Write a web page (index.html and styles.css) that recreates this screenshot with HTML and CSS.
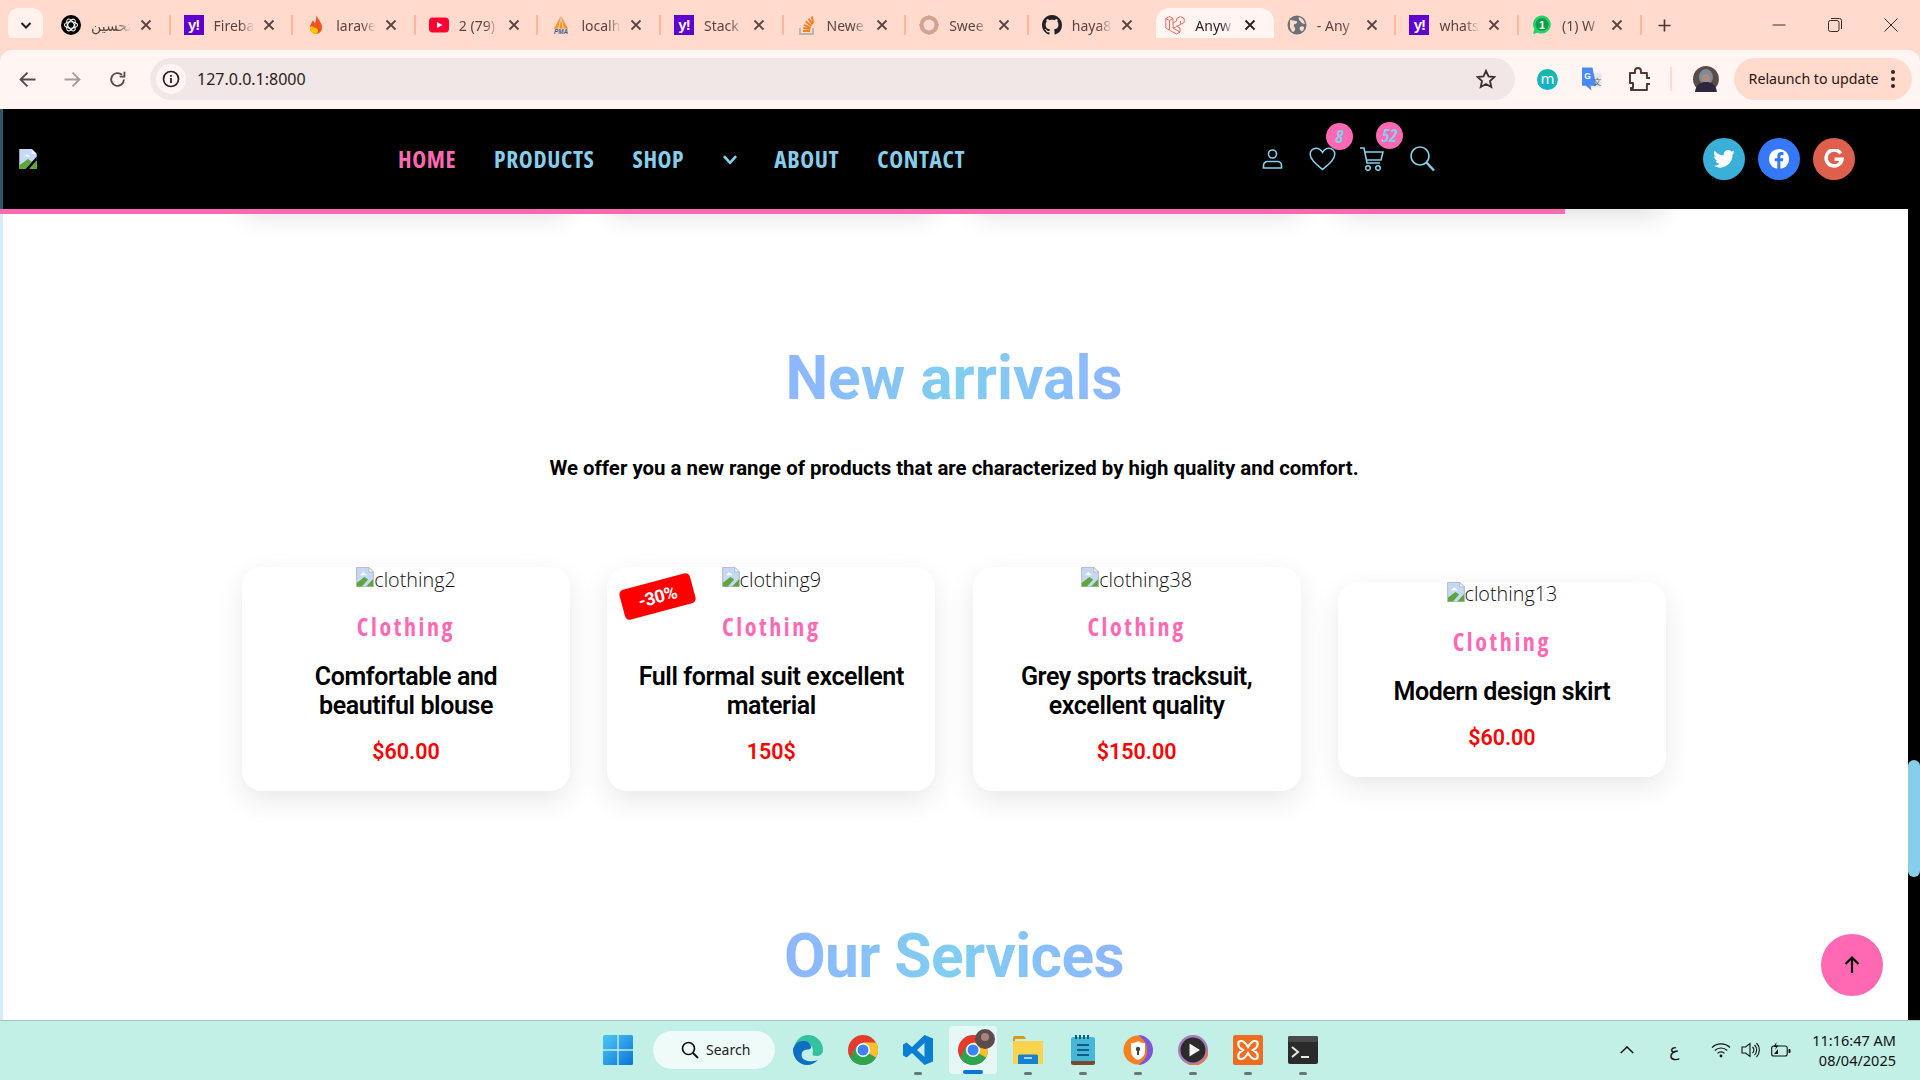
FILE: index.html
```html
<!DOCTYPE html>
<html lang="en">
<head>
<meta charset="utf-8">
<title>Anywhere</title>
<link rel="stylesheet" href="styles.css">
</head>
<body>
<div class="tabstrip">
  <div class="tab-menu"><svg width="14" height="14" viewBox="0 0 14 14"><path d="M2.5 5l4.5 4.5L11.5 5" fill="none" stroke="#2b1d1a" stroke-width="2"/></svg></div>

  <div class="tab"><svg class="fav" viewBox="0 0 20 20"><circle cx="10" cy="10" r="10" fill="#000"/><g fill="none" stroke="#fff" stroke-width="1.1"><ellipse cx="10" cy="10" rx="6.5" ry="3.2"/><ellipse cx="10" cy="10" rx="6.5" ry="3.2" transform="rotate(60 10 10)"/><ellipse cx="10" cy="10" rx="6.5" ry="3.2" transform="rotate(120 10 10)"/></g></svg><span class="tab-title">تحسين</span><svg class="x" viewBox="0 0 12 12"><path d="M1.5 1.5l9 9M10.5 1.5l-9 9"/></svg><i class="sep"></i></div>

  <div class="tab"><span class="fav yahoo">y!</span><span class="tab-title">Fireba</span><svg class="x" viewBox="0 0 12 12"><path d="M1.5 1.5l9 9M10.5 1.5l-9 9"/></svg><i class="sep"></i></div>

  <div class="tab"><svg class="fav" viewBox="0 0 20 20"><path d="M10 0c1 3 6 7 6 12.5A6.2 6.2 0 0 1 10 19a6.2 6.2 0 0 1-6-6.5c0-3 2-4.500 2.500-7 1 .5 2 1.500 2 3C10 7 10.500 3 10 0z" fill="#f4511e"/><path d="M6 11c1 2 5 1 6 4 .5 2-1 4-2.500 4A5.500 5.500 0 0 1 4 13c0-1 1-2 2-2z" fill="#ffc107"/></svg><span class="tab-title">larave</span><svg class="x" viewBox="0 0 12 12"><path d="M1.500 1.500l9 9M10.500 1.500l-9 9"/></svg><i class="sep"></i></div>

  <div class="tab"><svg class="fav" viewBox="0 0 20 20"><rect y="2.500" width="20" height="15" rx="4" fill="#ff0033"/><path d="M8 7l5.500 3L8 13z" fill="#fff"/></svg><span class="tab-title">2 (79)</span><svg class="x" viewBox="0 0 12 12"><path d="M1.500 1.500l9 9M10.500 1.500l-9 9"/></svg><i class="sep"></i></div>

  <div class="tab"><svg class="fav" viewBox="0 0 22 20"><path d="M11 0L3 14h5zM11 0l8 14h-5zM11 3l-2 11h4z" fill="#f39a2d"/><text x="11" y="19.500" font-size="7" font-weight="700" font-style="italic" text-anchor="middle" fill="#3c5a9a" font-family="Liberation Sans">PMA</text></svg><span class="tab-title">localh</span><svg class="x" viewBox="0 0 12 12"><path d="M1.500 1.500l9 9M10.500 1.500l-9 9"/></svg><i class="sep"></i></div>

  <div class="tab"><span class="fav yahoo">y!</span><span class="tab-title">Stack</span><svg class="x" viewBox="0 0 12 12"><path d="M1.500 1.500l9 9M10.500 1.500l-9 9"/></svg><i class="sep"></i></div>

  <div class="tab"><svg class="fav" viewBox="0 0 20 20"><path d="M3 13v6h13v-6" fill="none" stroke="#b9b4ae" stroke-width="1.800"/><g stroke="#f48024" stroke-width="2" fill="none"><path d="M6 16h7M6.300 13l7 1M7 9.800l6.500 3M8.800 6.500l5.500 4.500M11.500 3.500l4 6M15 1.500l1 7"/></g></svg><span class="tab-title">Newe</span><svg class="x" viewBox="0 0 12 12"><path d="M1.500 1.500l9 9M10.500 1.500l-9 9"/></svg><i class="sep"></i></div>

  <div class="tab"><svg class="fav" viewBox="0 0 20 20"><circle cx="10" cy="10" r="7.500" fill="none" stroke="#d9a679" stroke-width="4"/><circle cx="10" cy="10" r="7" fill="none" stroke="#c79ac9" stroke-width="2" stroke-dasharray="3 3"/><path d="M10 0v2M10 18v2M0 10h2M18 10h2" stroke="#c79ac9"/></svg><span class="tab-title">Swee</span><svg class="x" viewBox="0 0 12 12"><path d="M1.500 1.500l9 9M10.500 1.500l-9 9"/></svg><i class="sep"></i></div>

  <div class="tab"><svg class="fav" viewBox="0 0 16 16"><path fill="#1f2328" d="M8 0C3.580 0 0 3.580 0 8c0 3.540 2.290 6.530 5.470 7.590.4.070.55-.17.55-.38 0-.19-.01-.82-.01-1.490-2.010.37-2.530-.49-2.690-.94-.09-.23-.48-.94-.82-1.130-.28-.15-.68-.52-.01-.53.63-.01 1.080.58 1.230.82.72 1.210 1.870.87 2.330.66.070-.52.28-.87.51-1.070-1.780-.2-3.640-.89-3.640-3.950 0-.87.31-1.590.82-2.150-.08-.2-.36-1.020.08-2.120 0 0 .67-.21 2.200.82.64-.18 1.320-.27 2-.27.68 0 1.360.09 2 .27 1.530-1.040 2.200-.82 2.200-.82.44 1.100.16 1.920.08 2.120.51.56.82 1.270.82 2.150 0 3.070-1.870 3.750-3.650 3.950.29.25.54.73.54 1.480 0 1.070-.01 1.930-.01 2.200 0 .21.15.46.55.38A8.013 8.013 0 0 0 16 8c0-4.420-3.580-8-8-8z"/></svg><span class="tab-title">haya8</span><svg class="x" viewBox="0 0 12 12"><path d="M1.500 1.500l9 9M10.500 1.500l-9 9"/></svg></div>

  <div class="tab tab-active"><svg class="fav" viewBox="0 0 20 20"><path d="M.8 3.500L4.500 1.500 8 3.500v9.500l7 4 -3.500 2 -10.700-6zM8 8l3.700-2V3.500l3.700-2 3.800 2v4l-3.800 2V6M15.400 9.500L8 13.500M8 3.500L4.500 5.500.8 3.500M4.500 5.500v9.500M15 17v-4l-3.500-2" fill="none" stroke="#f4655a" stroke-width="1"/></svg><span class="tab-title">Anyw</span><svg class="x" viewBox="0 0 12 12"><path d="M1.500 1.500l9 9M10.500 1.500l-9 9"/></svg></div>

  <div class="tab"><svg class="fav" viewBox="0 0 20 20"><circle cx="10" cy="10" r="9.500" fill="#6b7176"/><path d="M3 5c3 0 4 1 6 1s1 3-1 3-1 3 0 4-1 4-2 4S2 12 3 10zM12 2c3 1 5 3 6 7-2 0-3-1-4-2s-3-3-2-5zM13 12c2-1 4-1 4 1s-2 4-3 3-2-3-1-4z" fill="#ffdacd"/></svg><span class="tab-title">- Any</span><svg class="x" viewBox="0 0 12 12"><path d="M1.500 1.500l9 9M10.500 1.500l-9 9"/></svg><i class="sep"></i></div>

  <div class="tab"><span class="fav yahoo">y!</span><span class="tab-title">whats</span><svg class="x" viewBox="0 0 12 12"><path d="M1.500 1.500l9 9M10.500 1.500l-9 9"/></svg><i class="sep"></i></div>

  <div class="tab"><svg class="fav" viewBox="0 0 20 20"><path d="M10 .5a9 9 0 0 0-7.700 13.600L1 19l5-1.300A9 9 0 1 0 10 .5z" fill="#25d366"/><circle cx="10" cy="9.500" r="6.500" fill="#0d9e4a"/><text x="10" y="13.500" font-size="11" font-weight="700" text-anchor="middle" fill="#fff" font-family="Liberation Sans">1</text></svg><span class="tab-title">(1) W</span><svg class="x" viewBox="0 0 12 12"><path d="M1.500 1.500l9 9M10.500 1.500l-9 9"/></svg><i class="sep"></i></div>

  <svg class="plus" viewBox="0 0 14 14"><path d="M7 .5v13M.5 7h13" stroke="#4a3a36" stroke-width="1.800"/></svg>

  <div class="win-controls">
    <svg viewBox="0 0 14 14"><path d="M.5 7h13" stroke="#3a2c28"/></svg>
    <svg viewBox="0 0 14 14"><rect x=".5" y="2.500" width="10.500" height="11" rx="2" fill="none" stroke="#3a2c28"/><path d="M3 .5h8.500a2 2 0 0 1 2 2V11" fill="none" stroke="#3a2c28"/></svg>
    <svg viewBox="0 0 14 14"><path d="M.5.500l13 13M13.500.500l-13 13" stroke="#3a2c28"/></svg>
  </div>
</div>

<div class="toolbar">
  <svg class="nav-btn" viewBox="0 0 16 16"><path d="M15.500 8H1.500M8 1.500L1.500 8 8 14.500" fill="none" stroke="#5b4a45" stroke-width="1.800"/></svg>
  <svg class="nav-btn nav-off" viewBox="0 0 16 16"><path d="M.5 8h14M8 1.500L14.500 8 8 14.500" fill="none" stroke="#a89c98" stroke-width="1.800"/></svg>
  <svg class="nav-btn" viewBox="0 0 16 16"><path d="M14 8a6 6 0 1 1-1.800-4.300M14.500 .8v4.500H10" fill="none" stroke="#5b4a45" stroke-width="1.800"/></svg>
  <div class="address">
    <span class="site-info"><svg width="18" height="18" viewBox="0 0 18 18"><circle cx="9" cy="9" r="7.500" fill="none" stroke="#2b1d1a" stroke-width="1.700"/><path d="M9 8v5M9 5v1.800" stroke="#2b1d1a" stroke-width="1.800"/></svg></span>
    <span class="url">127.0.0.1:8000</span>
    <svg class="star" viewBox="0 0 20 20"><path d="M10 1.800l2.500 5.600 6 .6-4.500 4 1.300 6L10 15.000 4.700 18l1.300-6-4.500-4 6-.6z" fill="none" stroke="#3f302c" stroke-width="1.800"/></svg>
  </div>
  <div class="tool-right">
    <span class="ext-m">m</span>
    <svg class="ext-tr" viewBox="0 0 22 24"><path d="M9 6h12v15H9z" fill="#e8e8e8"/><path d="M0 0h11l4 19H9l1 5-6-5H0z" fill="#4a8af4"/><text x="6" y="12" font-size="9" font-weight="700" text-anchor="middle" fill="#fff" font-family="Liberation Sans">G</text><text x="16" y="18" font-size="8" text-anchor="middle" fill="#666" font-family="Noto Sans CJK SC">文</text></svg>
    <svg class="ext-pz" viewBox="0 0 22 24"><path d="M2 6h5V4a3 3 0 0 1 6 0v2h6v5h2a3 3 0 0 1 0 6h-2v6H3v-2a0 0 0 0 1 0 0h2v-5H2z" fill="none" stroke="#4b3a36" stroke-width="2" stroke-linejoin="round"/></svg>
    <i class="tool-sep"></i>
    <svg class="avatar" viewBox="0 0 26 26"><circle cx="13" cy="13" r="13" fill="#5d4b4a"/><ellipse cx="13" cy="11" rx="7" ry="8" fill="#7b8d98"/><circle cx="13" cy="12" r="4" fill="#b08a7c"/><path d="M2 26c1-8 6-10 11-10s10 2 11 10z" fill="#2e2740"/></svg>
    <div class="relaunch"><span class="relaunch-text">Relaunch to update</span><svg width="6" height="20" viewBox="0 0 6 20"><circle cx="3" cy="3" r="2" fill="#3a2020"/><circle cx="3" cy="10" r="2" fill="#3a2020"/><circle cx="3" cy="17" r="2" fill="#3a2020"/></svg></div>
  </div>
</div>

<div class="page">
  <div class="content">
    <header class="site-header">
      <svg class="logo" viewBox="0 0 14 16"><path d="M0 0h10l4 4v12H0z" fill="#c4d8f7"/><path d="M10 0l4 4h-4z" fill="#f4f4f4"/><path d="M4 6l2-2 3 2z" fill="#fff"/><path d="M0 16v-3l7-5 3 2-5 6z" fill="#5ea63b"/><path d="M8 16l6-7v7z" fill="#5ea63b"/><path d="M5 16l9-10v3l-6 7z" fill="#000"/></svg>
      <nav class="main-nav">
        <a class="nav-link is-current">HOME</a>
        <a class="nav-link">PRODUCTS</a>
        <a class="nav-link">SHOP</a>
        <svg class="nav-chevron" viewBox="0 0 14 10"><path d="M1.500 2l5.500 6 5.500-6" fill="none" stroke="#87ceeb" stroke-width="2.400"/></svg>
        <a class="nav-link">ABOUT</a>
        <a class="nav-link">CONTACT</a>
      </nav>
      <div class="head-icons">
        <svg class="hi hi-user" viewBox="0 0 21 20"><circle cx="10.500" cy="5" r="4" fill="none" stroke="#87ceeb" stroke-width="1.600"/><path d="M1.500 19v-2.500a4 4 0 0 1 4-4h10a4 4 0 0 1 4 4V19z" fill="none" stroke="#87ceeb" stroke-width="1.600"/></svg>
        <span class="hi-wrap hi-heart"><svg viewBox="0 0 27 24"><path d="M13.500 22.500C7 17 1.200 12.500 1.200 7.300A5.800 5.800 0 0 1 7 1.300c2.800 0 5 1.500 6.500 4.200C15 2.800 17.200 1.300 20 1.300a5.800 5.800 0 0 1 5.800 6c0 5.200-5.800 9.700-12.300 15.200z" fill="none" stroke="#87ceeb" stroke-width="1.500"/></svg><b class="count count-wish">8</b></span>
        <span class="hi-wrap hi-cart"><svg viewBox="0 0 24 24"><path d="M0 1h4l3 15h13M5 5h18l-2 8H6.500" fill="none" stroke="#87ceeb" stroke-width="1.600"/><circle cx="8" cy="21" r="2.300" fill="none" stroke="#87ceeb" stroke-width="1.500"/><circle cx="18" cy="21" r="2.300" fill="none" stroke="#87ceeb" stroke-width="1.500"/></svg><b class="count count-cart">52</b></span>
        <svg class="hi hi-search" viewBox="0 0 25 25"><circle cx="10" cy="10" r="9" fill="none" stroke="#87ceeb" stroke-width="1.700"/><path d="M16.500 16.500L24 24.500" stroke="#87ceeb" stroke-width="2.400"/></svg>
      </div>
      <div class="socials">
        <span class="social tw"><svg width="22" height="18" viewBox="0 0 24 20"><path fill="#fff" d="M24 2.400a10 10 0 0 1-2.800.8A5 5 0 0 0 23.300.500a10 10 0 0 1-3.100 1.200 4.900 4.900 0 0 0-8.400 4.500A14 14 0 0 1 1.700.900a4.900 4.900 0 0 0 1.500 6.600 4.900 4.900 0 0 1-2.200-.6 4.900 4.900 0 0 0 3.900 4.900 4.900 4.900 0 0 1-2.200.1 4.900 4.900 0 0 0 4.600 3.400A9.900 9.900 0 0 1 0 17.300 14 14 0 0 0 21.500 4.900 10 10 0 0 0 24 2.400z"/></svg></span>
        <span class="social fb"><svg width="22" height="22" viewBox="0 0 24 24"><circle cx="12" cy="12" r="11" fill="#fff"/><path fill="#3578fa" d="M13.500 23v-8.500h2.800l.5-3.300h-3.300V9.200c0-1 .4-1.700 1.800-1.700h1.600V4.600c-.7-.1-1.500-.2-2.400-.2-2.600 0-4.300 1.500-4.300 4.400v2.400H7.300v3.300h2.900V23z"/></svg></span>
        <span class="social gg"><svg width="20" height="20" viewBox="0 0 20 20"><path d="M16.800 4.500A8 8 0 1 0 18 10.200h-7.500" fill="none" stroke="#fff" stroke-width="3.600"/></svg></span>
      </div>
    </header>
    <div class="progress"><div class="progress-fill"></div></div>

    <main class="main">
      <div class="ghost-row"><i></i><i></i><i></i><i></i></div>

      <h2 class="section-title title-first">New arrivals</h2>
      <p class="section-sub">We offer you a new range of products that are characterized by high quality and comfort.</p>

      <div class="product-grid">
        <article class="card">
          <div class="alt-line"><svg class="broken" viewBox="0 0 14 16"><path d="M.3.300h9.700l3.700 3.700v11.700H.3z" fill="#c4d8f7" stroke="#a9a9a9" stroke-width=".6"/><path d="M10 .3l3.700 3.700H10z" fill="#f4f4f4" stroke="#a9a9a9" stroke-width=".5"/><path d="M3 6.500l2.500-2.500 3 2.500z" fill="#fff"/><path d="M.5 15.500v-3l6-4.500 3 2-5 5.500z" fill="#5ea63b"/><path d="M8 15.500l5.500-6v6z" fill="#5ea63b"/></svg>clothing2</div>
          <div class="cat">Clothing</div>
          <h3 class="name">Comfortable and beautiful blouse</h3>
          <div class="price">$60.00</div>
        </article>
        <article class="card">
          <span class="discount">-30%</span>
          <div class="alt-line"><svg class="broken" viewBox="0 0 14 16"><path d="M.3.300h9.700l3.700 3.700v11.700H.3z" fill="#c4d8f7" stroke="#a9a9a9" stroke-width=".6"/><path d="M10 .3l3.700 3.700H10z" fill="#f4f4f4" stroke="#a9a9a9" stroke-width=".5"/><path d="M3 6.500l2.500-2.500 3 2.500z" fill="#fff"/><path d="M.5 15.500v-3l6-4.500 3 2-5 5.500z" fill="#5ea63b"/><path d="M8 15.500l5.500-6v6z" fill="#5ea63b"/></svg>clothing9</div>
          <div class="cat">Clothing</div>
          <h3 class="name">Full formal suit excellent material</h3>
          <div class="price">150$</div>
        </article>
        <article class="card">
          <div class="alt-line"><svg class="broken" viewBox="0 0 14 16"><path d="M.3.300h9.700l3.700 3.700v11.700H.3z" fill="#c4d8f7" stroke="#a9a9a9" stroke-width=".6"/><path d="M10 .3l3.700 3.700H10z" fill="#f4f4f4" stroke="#a9a9a9" stroke-width=".5"/><path d="M3 6.500l2.500-2.500 3 2.500z" fill="#fff"/><path d="M.5 15.500v-3l6-4.500 3 2-5 5.500z" fill="#5ea63b"/><path d="M8 15.500l5.500-6v6z" fill="#5ea63b"/></svg>clothing38</div>
          <div class="cat">Clothing</div>
          <h3 class="name">Grey sports tracksuit, excellent quality</h3>
          <div class="price">$150.00</div>
        </article>
        <article class="card">
          <div class="alt-line"><svg class="broken" viewBox="0 0 14 16"><path d="M.3.300h9.700l3.700 3.700v11.700H.3z" fill="#c4d8f7" stroke="#a9a9a9" stroke-width=".6"/><path d="M10 .3l3.700 3.700H10z" fill="#f4f4f4" stroke="#a9a9a9" stroke-width=".5"/><path d="M3 6.500l2.500-2.500 3 2.500z" fill="#fff"/><path d="M.5 15.500v-3l6-4.500 3 2-5 5.500z" fill="#5ea63b"/><path d="M8 15.500l5.500-6v6z" fill="#5ea63b"/></svg>clothing13</div>
          <div class="cat">Clothing</div>
          <h3 class="name">Modern design skirt</h3>
          <div class="price">$60.00</div>
        </article>
      </div>

      <h2 class="section-title title-services">Our Services</h2>
    </main>
    <button class="to-top" type="button"><svg width="20" height="20" viewBox="0 0 20 20"><path d="M10 18V2.500M3.500 9L10 2.500 16.500 9" fill="none" stroke="#000" stroke-width="2.200"/></svg></button>
  </div>
  <div class="scrollbar"><div class="thumb"></div></div>
</div>

<footer class="taskbar">
  <div class="tb-item"><svg class="tb-ic" viewBox="0 0 30 30"><defs><linearGradient id="w" x1="0" y1="0" x2="1" y2="1"><stop offset="0" stop-color="#4fc8f5"/><stop offset="1" stop-color="#0a74d8"/></linearGradient></defs><path fill="url(#w)" d="M0 1.500A1.500 1.500 0 0 1 1.500 0h12.800v14.300H0zM15.700 0h12.800A1.500 1.500 0 0 1 30 1.500v12.800H15.700zM0 15.700h14.300V30H1.500A1.500 1.500 0 0 1 0 28.500zM15.700 15.700H30v12.800a1.500 1.500 0 0 1-1.500 1.500H15.700z"/></svg></div>
  <div class="tb-search"><svg width="18" height="18" viewBox="0 0 18 18"><circle cx="7.500" cy="7.500" r="6" fill="none" stroke="#111" stroke-width="1.700"/><path d="M12 12l5 5" stroke="#111" stroke-width="1.900"/></svg><span>Search</span></div>
  <div class="tb-item tb-first"><svg class="tb-ic" viewBox="0 0 30 30"><path d="M15 0a15 15 0 0 1 15 15c0 4-3 6-7 6-5 0-3-3-3-5 0-5-4-9-9-9-4 0-8 2-10 5C3 5 8 0 15 0z" fill="#35c1a0"/><path d="M1 12c2-4 5-6 10-6 4 0 7 3 7 6s-3 2-6 3c-3 1-4 4-3 7 1 3 6 5 12 4 2 0 3-1 4-1-3 3-7 5-11 5C6 30 0 23 0 15c0-1 0-2 1-3z" fill="#0c6fc4"/></svg></div>
  <div class="tb-item"><svg class="tb-ic" viewBox="0 0 30 30"><circle cx="15" cy="15" r="15" fill="#e33b2e"/><path d="M15 15L2 22.500A15 15 0 0 0 15 30a15 15 0 0 0 13-7.500z" fill="#2ea44f"/><path d="M15 15L28 22.500A15 15 0 0 0 28 7.500H15z" fill="#fbc02d"/><path d="M15 15L2 22.500 8.500 11z" fill="#2ea44f"/><circle cx="15" cy="15" r="7" fill="#fff"/><circle cx="15" cy="15" r="5.500" fill="#3b82f6"/></svg></div>
  <div class="tb-item"><svg class="tb-ic" viewBox="0 0 30 30"><path d="M21.500 0L30 3.500v23L21.500 30 9 18 3.500 22.500 0 20.500v-11L3.500 7.500 9 12zM21.500 8L14 15l7.500 7z" fill="#0a7fd1" fill-rule="evenodd"/></svg><i class="tb-dot"></i></div>
  <div class="tb-item tb-active"><svg class="tb-ic" viewBox="0 0 30 30"><circle cx="15" cy="15" r="15" fill="#e33b2e"/><path d="M15 15L2 22.500A15 15 0 0 0 15 30a15 15 0 0 0 13-7.500z" fill="#2ea44f"/><path d="M15 15L28 22.500A15 15 0 0 0 28 7.500H15z" fill="#fbc02d"/><path d="M15 15L2 22.500 8.500 11z" fill="#2ea44f"/><circle cx="15" cy="15" r="7" fill="#fff"/><circle cx="15" cy="15" r="5.500" fill="#3b82f6"/></svg><svg class="tb-badge" viewBox="0 0 20 20"><circle cx="10" cy="10" r="10" fill="#5c4c4c"/><circle cx="10" cy="8" r="4" fill="#a8837a"/></svg><i class="tb-bar"></i></div>
  <div class="tb-item"><svg class="tb-ic" viewBox="0 0 30 30"><path d="M0 3a2 2 0 0 1 2-2h9l2 3h-11v4H0z" fill="#d69b12"/><path d="M0 6h30v23H0z" fill="#fcd34d"/><path d="M5 21a1.500 1.500 0 0 1 1.500-1.500h17A1.500 1.500 0 0 1 25 21v8H5z" fill="#1480d0"/><path d="M11 23h8" stroke="#d9efff" stroke-width="1.500"/></svg><i class="tb-dot"></i></div>
  <div class="tb-item"><svg class="tb-ic" viewBox="0 0 30 30"><rect x="3" y="2" width="24" height="26" rx="2" fill="#45b7d9"/><path d="M3 26h24v2a2 2 0 0 1-2 2H5a2 2 0 0 1-2-2z" fill="#7b4a2a"/><path d="M9 10h12M9 15h12M9 20h12" stroke="#0f5d80" stroke-width="1.800"/><path d="M8 0v4M12 0v4M16 0v4M20 0v4" stroke="#135a78" stroke-width="2"/></svg><i class="tb-dot"></i></div>
  <div class="tb-item"><svg class="tb-ic" viewBox="0 0 30 30"><circle cx="15" cy="15" r="14.500" fill="#f5821f"/><path d="M15 0a15 15 0 0 1 15 15c0 8-7 15-15 15 6-4 9-8 9-15S20 4 15 0z" fill="#7d56d9"/><path d="M15 6c3 2 5 2 7 2v8c0 5-4 8-7 9-3-1-7-4-7-9V8c2 0 4 0 7-2z" fill="#fff"/><circle cx="15" cy="14" r="2.200" fill="#444"/><path d="M14 15h2v5h-2z" fill="#444"/></svg><i class="tb-dot"></i></div>
  <div class="tb-item"><svg class="tb-ic" viewBox="0 0 30 30"><circle cx="15" cy="15" r="15" fill="#a87ac0"/><circle cx="15" cy="15" r="15" fill="none" stroke="#e87b3a" stroke-width="2" stroke-dasharray="28 70"/><circle cx="15" cy="15" r="12.500" fill="#2b2b2b"/><path d="M11.500 8.500L22 15l-10.500 6.500z" fill="#f4f4f4"/></svg><i class="tb-dot"></i></div>
  <div class="tb-item"><svg class="tb-ic" viewBox="0 0 30 30"><rect width="30" height="30" rx="2" fill="#ee6d1f"/><path d="M8 6c4 0 5 3 7 6 2-3 3-6 7-6s3 5 1 7l-3 2 3 2c2 2 3 7-1 7s-5-3-7-6c-2 3-3 6-7 6s-3-5-1-7l3-2-3-2C5 11 4 6 8 6z" fill="none" stroke="#fff" stroke-width="2.200"/></svg><i class="tb-dot"></i></div>
  <div class="tb-item"><svg class="tb-ic" viewBox="0 0 30 30"><rect y="1" width="30" height="28" rx="2" fill="#2b2b2b"/><rect y="1" width="30" height="6" rx="2" fill="#4a4a4a"/><path d="M4 12l6 5-6 5" fill="none" stroke="#e8e8e8" stroke-width="2"/><path d="M13 22h8" stroke="#e8e8e8" stroke-width="2"/></svg><i class="tb-dot"></i></div>

  <div class="tray">
    <svg class="tr-chev" viewBox="0 0 14 8"><path d="M.8 7L7 1l6.200 6" fill="none" stroke="#111" stroke-width="1.500"/></svg>
    <span class="tr-lang">ع</span>
    <svg class="tr-wifi" viewBox="0 0 20 16"><path d="M1 5.500a13 13 0 0 1 18 0M3.800 8.500a9 9 0 0 1 12.400 0M6.500 11.300a5 5 0 0 1 7 0" fill="none" stroke="#111" stroke-width="1.100"/><circle cx="10" cy="14" r="1.400" fill="#111"/></svg>
    <svg class="tr-vol" viewBox="0 0 20 16"><path d="M1 5h3.500L9 1.500v13L4.500 11H1z" fill="none" stroke="#111" stroke-width="1.100"/><path d="M11.500 5a4 4 0 0 1 0 6M13.500 3a7 7 0 0 1 0 10M15.500 1a10 10 0 0 1 0 14" fill="none" stroke="#111" stroke-width="1.100"/></svg>
    <svg class="tr-bat" viewBox="0 0 20 16"><rect x=".7" y="4" width="15.500" height="10" rx="2" fill="none" stroke="#111" stroke-width="1.100"/><path d="M17.500 7h1a1 1 0 0 1 1 1v2a1 1 0 0 1-1 1h-1z" fill="#111"/><path d="M3 12l4-5v5z" fill="#111"/><path d="M5.500 0L2.500 5h2.500l-1 3 3.500-4.500H5z" fill="#111"/></svg>
    <div class="clock"><span>11:16:47 AM</span><span>08/04/2025</span></div>
  </div>
</footer>
</body>
</html>
```

FILE: styles.css
```css
* { box-sizing: border-box; }
html, body { margin: 0; height: 100%; }
body {
  width: 1920px;
  height: 1080px;
  overflow: hidden;
  display: flex;
  flex-direction: column;
  font-family: "Open Sans", "Noto Sans", sans-serif;
  background: #fff;
}

/* Browser tab strip */
.tabstrip {
  height: 50px;
  flex: none;
  display: flex;
  align-items: center;
  padding-left: 8px;
  background: #ffdacd;
}
.tab-menu {
  width: 35px;
  height: 34px;
  margin-right: 5px;
  border-radius: 10px;
  background: #fff1ec;
  display: flex;
  align-items: center;
  justify-content: center;
}
.tab {
  width: 122.6px;
  height: 34px;
  flex: none;
  display: flex;
  align-items: center;
  padding-left: 13px;
  font-size: 15px;
  color: #5a4640;
}
.fav {
  width: 20px;
  height: 20px;
  flex: none;
}
.yahoo {
  background: #5f01d1;
  color: #fff;
  font-family: "Liberation Sans", sans-serif;
  font-weight: 700;
  font-size: 15px;
  line-height: 20px;
  text-align: center;
  letter-spacing: -1px;
}
.tab-title {
  width: 40px;
  margin-left: 10px;
  overflow: hidden;
  white-space: nowrap;
  font-family: "Noto Sans", "DejaVu Sans", sans-serif;
  font-size: 14px;
  -webkit-mask-image: linear-gradient(90deg, #000 65%, transparent 100%);
  mask-image: linear-gradient(90deg, #000 65%, transparent 100%);
}
.x {
  width: 12px;
  height: 12px;
  margin-left: 9px;
  flex: none;
  fill: none;
  stroke: #5a4640;
  stroke-width: 1.800;
}
.sep {
  width: 2px;
  height: 20px;
  margin-left: auto;
  background: #ffb7a1;
}
.tab-active {
  position: relative;
  width: 117.5px;
  height: 42px;
  align-self: flex-end;
  margin-left: 5px;
  padding-left: 9px;
  padding-bottom: 8px;
  background: #fff6f4;
  border-radius: 14px 14px 0 0;
  color: #2b1d1a;
}
.tab-active .x { stroke: #2b1d1a; }
.tab-active::before,
.tab-active::after {
  content: "";
  position: absolute;
  bottom: 0;
  width: 14px;
  height: 14px;
}
.tab-active::before {
  left: -14px;
  background: radial-gradient(circle at 0 0, #ffdacd 14px, #fff6f4 14.500px);
}
.tab-active::after {
  right: -14px;
  background: radial-gradient(circle at 100% 0, #ffdacd 14px, #fff6f4 14.500px);
}
.plus {
  width: 13px;
  height: 13px;
  margin-left: 16px;
  flex: none;
}
.win-controls {
  margin-left: auto;
  display: flex;
  padding-right: 1px;
}
.win-controls svg {
  width: 56px;
  height: 14px;
}

/* Browser toolbar */
.toolbar {
  height: 59px;
  flex: none;
  display: flex;
  align-items: center;
  padding-left: 5px;
  padding-bottom: 1px;
  background: #fff6f4;
  border-radius: 12px 12px 0 0;
  position: relative;
  box-shadow: 0 -12px 0 0 #ffdacd;
}
.nav-btn {
  width: 45px;
  height: 17px;
  flex: none;
}
.address {
  flex: 1;
  height: 42px;
  margin-left: 10px;
  display: flex;
  align-items: center;
  padding-left: 6px;
  padding-right: 19px;
  border-radius: 21px;
  background: #f1e7e6;
}
.site-info {
  width: 30px;
  height: 30px;
  border-radius: 50%;
  background: #fff6f4;
  display: flex;
  align-items: center;
  justify-content: center;
}
.url {
  margin-left: 11px;
  font-family: "Noto Sans", sans-serif;
  font-size: 16px;
  color: #2b1d1a;
}
.star {
  width: 20px;
  height: 20px;
  margin-left: auto;
}
.tool-right {
  width: 405px;
  flex: none;
  display: flex;
  align-items: center;
  padding-left: 22px;
  padding-right: 8px;
}
.ext-m {
  width: 21px;
  height: 21px;
  border-radius: 50%;
  background: linear-gradient(#18b7a7, #12b3cf);
  color: #fff;
  font-size: 15px;
  line-height: 19px;
  text-align: center;
  font-family: "Noto Sans", sans-serif;
}
.ext-tr {
  width: 21px;
  height: 24px;
  margin-left: 24px;
}
.ext-pz {
  width: 22px;
  height: 24px;
  margin-left: 25px;
}
.tool-sep {
  width: 2px;
  height: 24px;
  margin-left: 20px;
  background: #ffdacd;
}
.avatar {
  width: 26px;
  height: 26px;
  margin-left: 21px;
}
.relaunch {
  width: 179px;
  height: 42px;
  margin-left: 15px;
  display: flex;
  align-items: center;
  justify-content: space-between;
  padding: 0 16px 0 15px;
  border-radius: 21px;
  background: #ffdacd;
  font-family: "Noto Sans", sans-serif;
  font-size: 14.200px;
  color: #2b1414;
  white-space: nowrap;
}
.relaunch-text { padding-bottom: 2px; }

/* Page viewport */
.page {
  flex: 1;
  min-height: 0;
  display: flex;
}
.content {
  position: relative;
  flex: 1;
  min-width: 0;
  overflow: hidden;
  background: #fff;
}
.content::before {
  content: "";
  position: absolute;
  z-index: 1;
  left: 0;
  top: 0;
  bottom: 0;
  width: 3px;
  background: #d3eefa;
}
.scrollbar {
  width: 12px;
  flex: none;
  background: #000;
  padding-top: 651px;
}
.thumb {
  height: 117px;
  border-radius: 6px;
  background: #87ceeb;
}
.site-header {
  position: relative;
  z-index: 2;
  height: 100px;
  display: flex;
  align-items: center;
  background: #000;
  box-shadow: inset 3px 0 0 #2f5568;
}
.logo {
  width: 18px;
  height: 20px;
  margin-left: 19px;
  flex: none;
}
.main-nav {
  display: flex;
  align-items: center;
  margin-left: 361px;
}
.nav-link {
  font-size: 23.500px;
  font-stretch: 75%;
  font-weight: 700;
  letter-spacing: .6px;
  color: #87ceeb;
  margin-right: 38px;
  white-space: nowrap;
}
.nav-link.is-current { color: #ff69b4; }
.nav-chevron {
  width: 16px;
  height: 11px;
  margin-right: 36px;
}
.head-icons {
  position: absolute;
  left: 1262px;
  top: 37px;
  display: flex;
  align-items: center;
}
.hi-user { width: 21px; height: 20px; }
.hi-wrap { position: relative; display: block; }
.hi-wrap svg { display: block; }
.hi-heart { width: 27px; height: 24px; margin-left: 26px; }
.hi-cart { width: 24px; height: 24px; margin-left: 24px; }
.hi-search { width: 25px; height: 25px; margin-left: 26px; }
.count {
  position: absolute;
  width: 27px;
  height: 27px;
  border-radius: 50%;
  background: #ff69b4;
  color: #87ceeb;
  font-size: 18px;
  font-stretch: 75%;
  font-style: italic;
  font-weight: 700;
  line-height: 27px;
  text-align: center;
}
.count-wish { left: 17px; top: -24px; }
.count-cart { left: 16px; top: -25px; }
.socials {
  position: absolute;
  left: 1703px;
  top: 29px;
  display: flex;
  gap: 13px;
}
.social {
  width: 42px;
  height: 42px;
  border-radius: 50%;
  display: flex;
  align-items: center;
  justify-content: center;
}
.tw { background: #3ab0d8; }
.fb { background: #3578fa; }
.gg { background: #dd5f4c; }
.progress {
  position: relative;
  z-index: 2;
  height: 5px;
}
.progress-fill {
  width: 1565px;
  height: 5px;
  background: #ff69b4;
}

/* Main */
.main {
  display: flex;
  flex-direction: column;
  align-items: center;
}
.ghost-row {
  width: 1424px;
  height: 22px;
  margin-top: -30px;
  display: grid;
  grid-template-columns: repeat(4, 328px);
  gap: 37.300px;
}
.ghost-row i {
  display: block;
  border-radius: 20px;
  background: #fff;
  box-shadow: 0 10px 24px rgba(0, 0, 0, .13);
}
.section-title {
  margin: 0;
  font-family: "Roboto", sans-serif;
  font-size: 60.500px;
  line-height: 72px;
  font-weight: 700;
  text-align: center;
  background: linear-gradient(90deg, #8eb6ff, #80cef0 50%, #8eb6ff);
  -webkit-background-clip: text;
  background-clip: text;
  color: transparent;
}
.title-first { margin-top: 137px; }
.title-services { margin-top: 130px; letter-spacing: -.6px; }
.section-sub {
  margin: 38px 0 0;
  font-family: "Roboto", sans-serif;
  font-size: 20.400px;
  line-height: 30px;
  font-weight: 700;
  color: #000;
  text-align: center;
}
.product-grid {
  width: 1424px;
  margin-top: 84px;
  display: grid;
  grid-template-columns: repeat(4, 328px);
  gap: 37.300px;
  align-items: center;
}
.card {
  position: relative;
  padding: 0 30px 22px;
  border-radius: 20px;
  background: #fff;
  box-shadow: 0 10px 28px rgba(0, 0, 0, .09);
  text-align: center;
}
.alt-line {
  height: 26px;
  padding-bottom: 2px;
  display: flex;
  align-items: center;
  justify-content: center;
  font-size: 19.800px;
  font-stretch: 93%;
  font-weight: 300;
  color: #111;
}
.broken {
  width: 18px;
  height: 20px;
  margin-bottom: 4px;
}
.cat {
  margin-top: 16px;
  font-size: 24px;
  font-stretch: 75%;
  line-height: 36px;
  font-weight: 700;
  letter-spacing: 2.600px;
  color: #ff69b4;
}
.name {
  margin: 17px 0 0;
  font-family: "Roboto", sans-serif;
  font-size: 25px;
  line-height: 29px;
  font-weight: 600;
  letter-spacing: -.4px;
  color: #000;
}
.price {
  margin-top: 15px;
  font-family: "Roboto", sans-serif;
  font-size: 21.500px;
  line-height: 34px;
  font-weight: 600;
  color: #f00;
}
.discount {
  position: absolute;
  left: 14px;
  top: 14px;
  width: 73px;
  height: 31px;
  border-radius: 5px;
  background: #f00;
  color: #fff;
  font-family: "Roboto", sans-serif;
  font-size: 18px;
  font-weight: 700;
  letter-spacing: -.5px;
  line-height: 31px;
  transform: rotate(-15deg);
}
.to-top {
  position: absolute;
  z-index: 4;
  right: 25px;
  bottom: 24px;
  width: 62px;
  height: 62px;
  padding: 0;
  border: 0;
  border-radius: 50%;
  background: #ff69b4;
  display: flex;
  align-items: center;
  justify-content: center;
}

/* Taskbar */
.taskbar {
  height: 60px;
  flex: none;
  display: flex;
  align-items: center;
  padding-left: 590px;
  padding-bottom: 2px;
  border-top: 1px solid #a6c4bc;
  background: #c2efe6;
}
.tb-item {
  position: relative;
  width: 55px;
  height: 48px;
  flex: none;
  display: flex;
  align-items: center;
  justify-content: center;
}
.tb-first { margin-left: 5px; }
.tb-ic {
  width: 30px;
  height: 30px;
}
.tb-dot {
  position: absolute;
  left: 50%;
  bottom: -1px;
  width: 8px;
  height: 3px;
  margin-left: -4px;
  border-radius: 2px;
  background: #66767a;
}
.tb-active::before {
  content: "";
  position: absolute;
  left: 3.500px;
  top: 0;
  width: 48px;
  height: 48px;
  border-radius: 4px;
  background: #e6f8f5;
}
.tb-active .tb-ic { position: relative; }
.tb-badge {
  position: absolute;
  left: 30px;
  top: 3px;
  width: 20px;
  height: 20px;
}
.tb-bar {
  position: absolute;
  left: 50%;
  bottom: 0;
  width: 20px;
  height: 4px;
  margin-left: -10px;
  border-radius: 2px;
  background: #0a74d8;
}
.tb-search {
  width: 122px;
  height: 38px;
  margin-left: 8px;
  flex: none;
  display: flex;
  align-items: center;
  padding-left: 28px;
  gap: 7px;
  border-radius: 19px;
  background: #eefbf8;
  font-family: "Noto Sans", sans-serif;
  font-size: 14px;
  color: #222;
}
.tray {
  margin-left: auto;
  display: flex;
  align-items: center;
  padding-right: 24px;
}
.tr-chev { width: 14px; height: 8px; }
.tr-lang {
  width: 20px;
  margin-left: 30px;
  font-family: "Noto Sans", "DejaVu Sans", sans-serif;
  font-size: 17px;
  text-align: center;
  color: #111;
}
.tr-wifi { width: 20px; height: 16px; margin-left: 27px; }
.tr-vol { width: 20px; height: 16px; margin-left: 10px; }
.tr-bat { width: 20px; height: 16px; margin-left: 10px; }
.clock {
  margin-left: 21px;
  display: flex;
  flex-direction: column;
  align-items: flex-end;
  font-family: "Noto Sans", sans-serif;
  font-size: 14.500px;
  line-height: 20px;
  color: #111;
}
```
